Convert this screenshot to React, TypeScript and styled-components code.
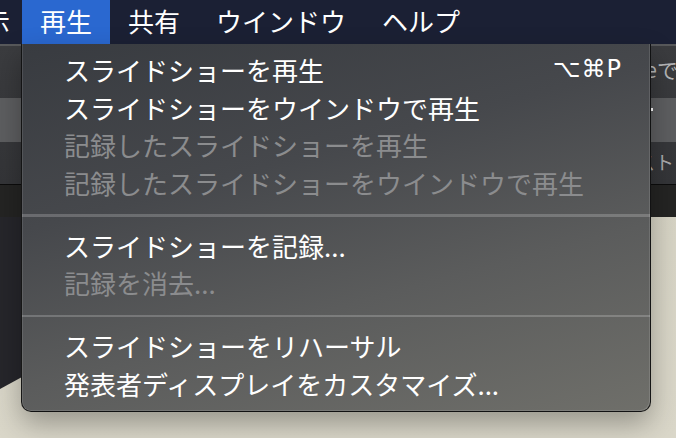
import * as React from 'react';
import styled, { createGlobalStyle } from 'styled-components';

const GlobalStyle = createGlobalStyle`
    html, body {
        margin: 0;
        padding: 0;
        background: #d5d2c3;
        overflow: hidden;
    }
    body {
        font-family: "Noto Sans CJK JP", "Noto Sans", "DejaVu Sans", sans-serif;
    }
`;

interface IMenuEntry {
    label: string;
    shortcut?: string;
    disabled?: boolean;
}

const menuGroups: IMenuEntry[][] = [
    [
        { label: 'スライドショーを再生', shortcut: '⌥⌘P' },
        { label: 'スライドショーをウインドウで再生' },
        { label: '記録したスライドショーを再生', disabled: true },
        { label: '記録したスライドショーをウインドウで再生', disabled: true },
    ],
    [
        { label: 'スライドショーを記録...' },
        { label: '記録を消去...', disabled: true },
    ],
    [
        { label: 'スライドショーをリハーサル' },
        { label: '発表者ディスプレイをカスタマイズ...' },
    ],
];

const barItems = ['再生', '共有', 'ウインドウ', 'ヘルプ'];

export default function App() {
    return (
        <Screen>
            <GlobalStyle />
            <MenuBar>
                <BarItem cut>表示</BarItem>
                {barItems.map(item => (
                    <BarItem key={item} active={item === '再生'}>{item}</BarItem>
                ))}
            </MenuBar>
            <Workspace>
                <Toolbar>
                    <TitleText>Keynoteで</TitleText>
                    <Field>
                        <Caret />
                    </Field>
                    <ToolLabel>スト</ToolLabel>
                </Toolbar>
                <Strip />
                <Lower>
                    <Sidebar />
                </Lower>

                <Menu>
                    {menuGroups.map((group, gi) => (
                        <React.Fragment key={gi}>
                            {gi > 0 && <Separator />}
                            {group.map(entry => (
                                <Row key={entry.label} disabled={entry.disabled}>
                                    <Label>{entry.label}</Label>
                                    {entry.shortcut && <Shortcut>{entry.shortcut}</Shortcut>}
                                </Row>
                            ))}
                        </React.Fragment>
                    ))}
                </Menu>
            </Workspace>
        </Screen>
    );
}

const Screen = styled('div')`
    width: 676px;
    height: 438px;
    overflow: hidden;
    display: flex;
    flex-direction: column;
    background: linear-gradient(180deg, #d3d0c0 0%, #dad7c9 100%);
`;

const MenuBar = styled('div')`
    display: flex;
    height: 44px;
    margin-left: -60px;
    background: #1b2034;
    flex-shrink: 0;
`;

const BarItem = styled('div')<{ active?: boolean; cut?: boolean }>`
    padding: 0 ${p => (p.cut ? '12px' : '18px')} 3px 18px;
    font-size: 26px;
    line-height: 41px;
    color: #ffffff;
    white-space: nowrap;
    background: ${p => (p.active ? '#2a68d0' : 'transparent')};
`;

const Workspace = styled('div')`
    position: relative;
    flex: 1;
    display: flex;
    flex-direction: column;
`;

const Toolbar = styled('div')`
    height: 141px;
    display: flex;
    flex-direction: column;
    align-items: flex-end;
    background: linear-gradient(180deg, #3b3c3f 0%, #343538 100%);
    border-top: 2px solid #58595b;
    border-bottom: 1px solid #0c0c0c;
    box-sizing: border-box;
    overflow: hidden;
`;

const TitleText = styled('div')`
    height: 52px;
    margin-right: -2px;
    font-size: 21px;
    line-height: 46px;
    color: #b5b6b8;
    white-space: nowrap;
`;

const Field = styled('div')`
    width: 100%;
    height: 44px;
    background: #5d5e60;
    display: flex;
    align-items: flex-start;
    padding: 10px 0 0 651px;
    box-sizing: border-box;
`;

const Caret = styled('span')`
    width: 2px;
    height: 3px;
    background: #ffffff;
`;

const ToolLabel = styled('div')`
    margin-right: 2px;
    font-size: 19px;
    line-height: 40px;
    color: #a9aaac;
    white-space: nowrap;
`;

const Strip = styled('div')`
    height: 32px;
    background: #242423;
    flex-shrink: 0;
`;

const Lower = styled('div')`
    flex: 1;
    display: flex;
`;

const Sidebar = styled('div')`
    width: 22px;
    height: 172px;
    background: #26262b;
    clip-path: polygon(0 0, 100% 0, 100% 160px, 0 172px);
`;

const Menu = styled('div')`
    position: absolute;
    top: 0;
    left: 21px;
    width: 630px;
    height: 368px;
    box-sizing: border-box;
    padding: 7px 0 9px;
    display: flex;
    flex-direction: column;
    background: linear-gradient(165deg, #383b40 0%, #46484c 35%, #5b5c5c 65%, #6f6f6a 100%);
    border: 1px solid rgba(10, 10, 10, 0.85);
    border-top: none;
    border-radius: 0 0 10px 10px;
    box-shadow: inset 1px 0 0 rgba(255, 255, 255, 0.1), inset -1px -1px 0 rgba(255, 255, 255, 0.12),
        0 12px 28px rgba(0, 0, 0, 0.3);
`;

const Row = styled('div')<{ disabled?: boolean }>`
    height: 37.5px;
    display: flex;
    justify-content: space-between;
    align-items: center;
    padding: 0 28px 0 42px;
    font-size: 26px;
    color: ${p => (p.disabled ? '#8b8c8e' : '#ffffff')};
    white-space: nowrap;
`;

const Label = styled('span')`
    line-height: 37.5px;
`;

const Shortcut = styled('span')`
    font-family: "DejaVu Sans", "Noto Sans", sans-serif;
    font-size: 24px;
    line-height: 37.5px;
    letter-spacing: 1px;
`;

const Separator = styled('div')`
    height: 3px;
    margin: 13px 0 10px;
    background: rgba(255, 255, 255, 0.2);
`;
